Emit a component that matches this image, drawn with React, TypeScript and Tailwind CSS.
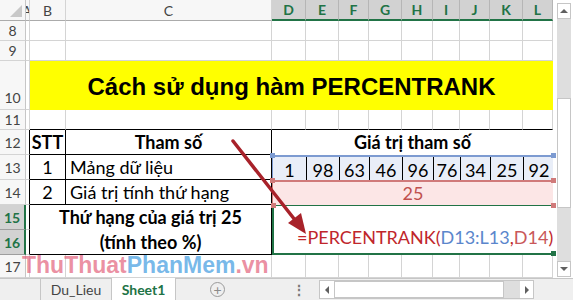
import React from "react";

const FONT = { fontFamily: "Lato, 'Liberation Sans', sans-serif" };
const GRID = "border-r border-b border-[#d4d4d4]";

function RowHead({ n, sel, bottom }: { n: string; sel?: boolean; bottom?: boolean }) {
  return (
    <div
      className={
        "flex justify-center text-[14px] border-b " +
        (bottom ? "items-end pb-[1px] " : "items-center ") +
        (sel
          ? "bg-[#d2d2d2] text-[#217346] font-bold border-r-2 border-r-[#217346] border-b-[#9e9e9e]"
          : "bg-[#f7f7f7] text-[#444] border-r border-r-[#c6c6c6] border-b-[#d4d4d4]")
      }
    >
      {n}
    </div>
  );
}

function ColHead({ l, sel }: { l: string; sel?: boolean }) {
  return (
    <div
      className={
        "flex items-center justify-center text-[14px] " +
        (sel
          ? "bg-[#d2d2d2] text-[#217346] font-bold border-r border-r-[#b6b6b6] border-b-2 border-b-[#217346]"
          : "bg-[#f7f7f7] text-[#444] border-r border-r-[#d4d4d4] border-b border-b-[#ababab]")
      }
    >
      {l}
    </div>
  );
}

const DL = ["D", "E", "F", "G", "H", "I", "J", "K", "L"];
const nums = ["1", "98", "63", "46", "96", "76", "34", "25", "92"];

function Blank({ extra = "" }: { extra?: string }) {
  return <div className={GRID + " " + extra} />;
}

function Handle({ c, pos }: { c: string; pos: string }) {
  return <div className={"absolute w-[5px] h-[5px] z-10 " + c + " " + pos} />;
}

export default function App() {
  return (
    <div className="w-[573px] h-[300px] bg-white overflow-hidden flex flex-col" style={FONT}>
      <div className="flex h-[278px]">
        <div className="relative w-[553px]">
          <div className="grid grid-cols-[26px_4px_36px_206px_34px_33px_30px_33px_31px_27px_30px_33px_30px] grid-rows-[21px_20px_20px_49px_20px_25px_25px_25px_25px_25px_23px] h-[278px]">
            {/* header row */}
            <div className="bg-[#f7f7f7] border-r border-r-[#c6c6c6] border-b border-b-[#ababab] relative">
              <div className="absolute right-[3px] bottom-[3px] w-0 h-0 border-l-[12px] border-l-transparent border-b-[12px] border-b-[#c8c8c8]" />
            </div>
            <div className="bg-[#f7f7f7] border-r border-r-[#d4d4d4] border-b border-b-[#ababab] overflow-hidden text-[14px] text-[#444] flex items-center">
              <span className="-ml-[4px]">A</span>
            </div>
            <ColHead l="B" />
            <ColHead l="C" />
            {DL.map((l) => (
              <ColHead key={l} l={l} sel />
            ))}

            {/* rows 8 and 9 */}
            {["8", "9"].map((r) => (
              <React.Fragment key={r}>
                <RowHead n={r} />
                <Blank />
                <Blank />
                <Blank />
                {DL.map((l) => (
                  <Blank key={l} />
                ))}
              </React.Fragment>
            ))}

            {/* row 10 title */}
            <RowHead n="10" bottom />
            <Blank />
            <div
              className="col-span-11 bg-[#ffff00] flex items-center justify-center text-[24px] font-bold text-black pt-[3px]"
              style={{ fontFamily: "'Liberation Sans', Arial, sans-serif" }}
            >
              Cách sử dụng hàm PERCENTRANK
            </div>

            {/* row 11 */}
            <RowHead n="11" />
            <Blank />
            <div className="border-r border-r-[#d4d4d4] border-b border-b-black" />
            <div className="border-r border-r-[#d4d4d4] border-b border-b-black" />
            {DL.map((l) => (
              <div key={l} className="border-r border-r-[#d4d4d4] border-b border-b-black" />
            ))}

            {/* row 12 */}
            <RowHead n="12" />
            <div className="border-r border-r-black border-b border-b-[#d4d4d4]" />
            <div className="border-r border-b border-black flex items-center justify-center font-bold text-[18px]">STT</div>
            <div className="border-r border-b border-black flex items-center justify-center font-bold text-[18px]">Tham số</div>
            <div className="col-span-9 flex items-center justify-center font-bold text-[18px] pb-[1px]">
              Giá trị tham số
            </div>

            {/* row 13 */}
            <RowHead n="13" />
            <div className="border-r border-r-black border-b border-b-[#d4d4d4]" />
            <div className="border-r border-b border-black flex items-center justify-center text-[18px]">1</div>
            <div className="border-r border-b border-black flex items-center pl-[4px] text-[18px]">Mảng dữ liệu</div>
            <div className="col-span-9 relative grid grid-cols-[34px_33px_30px_33px_31px_27px_30px_33px_30px] bg-[#e9eef8] border-t-2 border-t-[#7d9bd1] border-l border-l-[#7d9bd1]">
              <Handle c="bg-[#7d9bd1]" pos="-left-[3px] -top-[4px]" />
              <Handle c="bg-[#7d9bd1]" pos="-right-[3px] -top-[4px]" />
              {nums.map((n, i) => (
                <div
                  key={i}
                  className={
                    "flex items-center justify-center text-[18px] " +
                    (i < 8 ? "border-r border-black" : "")
                  }
                >
                  {n}
                </div>
              ))}
            </div>

            {/* row 14 */}
            <RowHead n="14" />
            <div className="border-r border-r-black border-b border-b-[#d4d4d4]" />
            <div className="border-r border-b border-black flex items-center justify-center text-[18px]">2</div>
            <div className="border-r border-b border-black flex items-center pl-[4px] text-[18px]">Giá trị tính thứ hạng</div>
            <div className="col-span-9 relative bg-[#fce6e6] border-t-2 border-t-[#d07a7a] border-l border-l-[#d07a7a] flex items-center justify-center text-[18px] text-[#c0504d]">
              <Handle c="bg-[#d07a7a]" pos="-left-[3px] -top-[4px]" />
              <Handle c="bg-[#d07a7a]" pos="-right-[3px] -top-[4px]" />
              25
            </div>

            {/* row 15-16 */}
            <RowHead n="15" sel />
            <div className="border-r border-r-black border-b border-b-[#d4d4d4]" />
            <div className="col-span-2 row-span-2 border-r border-b border-black flex flex-col items-center font-bold text-[18px] leading-[25px]">
              <div className="h-[25px] flex items-center">Thứ hạng của giá trị 25</div>
              <div className="h-[25px] flex items-center">(tính theo %)</div>
            </div>
            <div className="col-span-9 row-span-2 relative border-t border-t-[#217346] border-l-2 border-l-[#217346] border-b-2 border-b-[#217346] flex items-end pl-[23px] pb-[2px] text-[18px]">
              <Handle c="bg-[#d07a7a]" pos="-left-[3px] -top-[3px]" />
              <Handle c="bg-[#d07a7a]" pos="-right-[3px] -top-[3px]" />
              <Handle c="bg-[#217346]" pos="-right-[3px] -bottom-[3px]" />
              <span className="text-[#c0262b]">=PERCENTRANK(</span>
              <span className="text-[#5b86cc]">D13:L13</span>
              <span className="text-[#c0262b]">,</span>
              <span className="text-[#c9585a]">D14</span>
              <span className="text-[#c0262b]">)</span>
              <span className="inline-block w-[1px] h-[19px] bg-black ml-[2px] mb-[3px]" />
            </div>
            <RowHead n="16" sel />
            <div className="border-r border-r-black border-b border-b-[#d4d4d4]" />

            {/* row 17 */}
            <RowHead n="17" />
            <Blank />
            <Blank />
            <Blank />
            {DL.map((l) => (
              <Blank key={l} />
            ))}
          </div>

          {/* arrow */}
          <svg className="absolute left-0 top-0 pointer-events-none" width="553" height="278">
            <line x1="233" y1="141" x2="295" y2="220" stroke="#a8222a" strokeWidth="3.5" strokeLinecap="round" />
            <polygon points="306,234 288,223 301,213" fill="#a8222a" />
          </svg>

          {/* watermark */}
          <div
            className="absolute left-[22px] top-[254px] text-[23px] font-bold leading-none pointer-events-none whitespace-nowrap"
            style={{ fontFamily: "'Liberation Sans', Arial, sans-serif" }}
          >
            <span className="text-[#e2607a]/70">ThuThuat</span>
            <span className="text-[#3d9ae0]/70">PhanMem</span>
            <span className="text-[#e2607a]/70">.vn</span>
          </div>
        </div>

        {/* vertical scrollbar */}
        <div className="w-[20px] bg-white pl-[4px] pr-[2px] pt-[3px] flex flex-col">
          <div className="h-[16px] border border-[#c6c6c6] bg-white flex items-center justify-center">
            <div className="w-0 h-0 border-l-[4px] border-r-[4px] border-b-[4px] border-l-transparent border-r-transparent border-b-[#606060]" />
          </div>
          <div className="flex-1 bg-[#dedede] flex flex-col">
            <div className="h-[79px]" />
            <div className="h-[110px] bg-white border border-[#c6c6c6]" />
            <div className="flex-1" />
          </div>
          <div className="h-[16px] border border-[#c6c6c6] bg-white flex items-center justify-center mb-[1px]">
            <div className="w-0 h-0 border-l-[4px] border-r-[4px] border-t-[4px] border-l-transparent border-r-transparent border-t-[#606060]" />
          </div>
        </div>
      </div>

      {/* tab bar */}
      <div className="h-[22px] flex bg-[#efefef] border-t border-[#c6c6c6] text-[14px]">
        <div className="w-[40px]" />
        <div className="w-[72px] border-l border-r border-[#c6c6c6] flex items-center justify-center text-[#444]">
          Du_Lieu
        </div>
        <div className="w-[64px] bg-white border-r border-[#c6c6c6] flex items-center justify-center text-[#217346] font-bold -mt-[1px]">
          Sheet1
        </div>
        <div className="w-[34px]" />
        <div className="w-[16px] flex items-center">
          <div className="w-[15px] h-[15px] rounded-full border border-[#9a9a9a] flex items-center justify-center text-[#8a8a8a] text-[14px] leading-none">
            +
          </div>
        </div>
        <div className="w-[93px] flex items-center justify-end pr-[13px] text-[#777] font-bold">⋮</div>
        <div className="w-[215px] flex border border-[#c6c6c6] bg-white mt-[1px] mb-[1px]">
          <div className="w-[14px] flex items-center justify-center">
            <div className="w-0 h-0 border-t-[4px] border-b-[4px] border-r-[4px] border-t-transparent border-b-transparent border-r-[#606060]" />
          </div>
          <div className="w-[170px] bg-white border border-[#c6c6c6]" />
          <div className="flex-1 bg-[#dedede]" />
          <div className="w-[13px] flex items-center justify-center bg-white">
            <div className="w-0 h-0 border-t-[4px] border-b-[4px] border-l-[4px] border-t-transparent border-b-transparent border-l-[#606060]" />
          </div>
        </div>
        <div className="flex-1 bg-[#efefef]" />
      </div>
    </div>
  );
}
